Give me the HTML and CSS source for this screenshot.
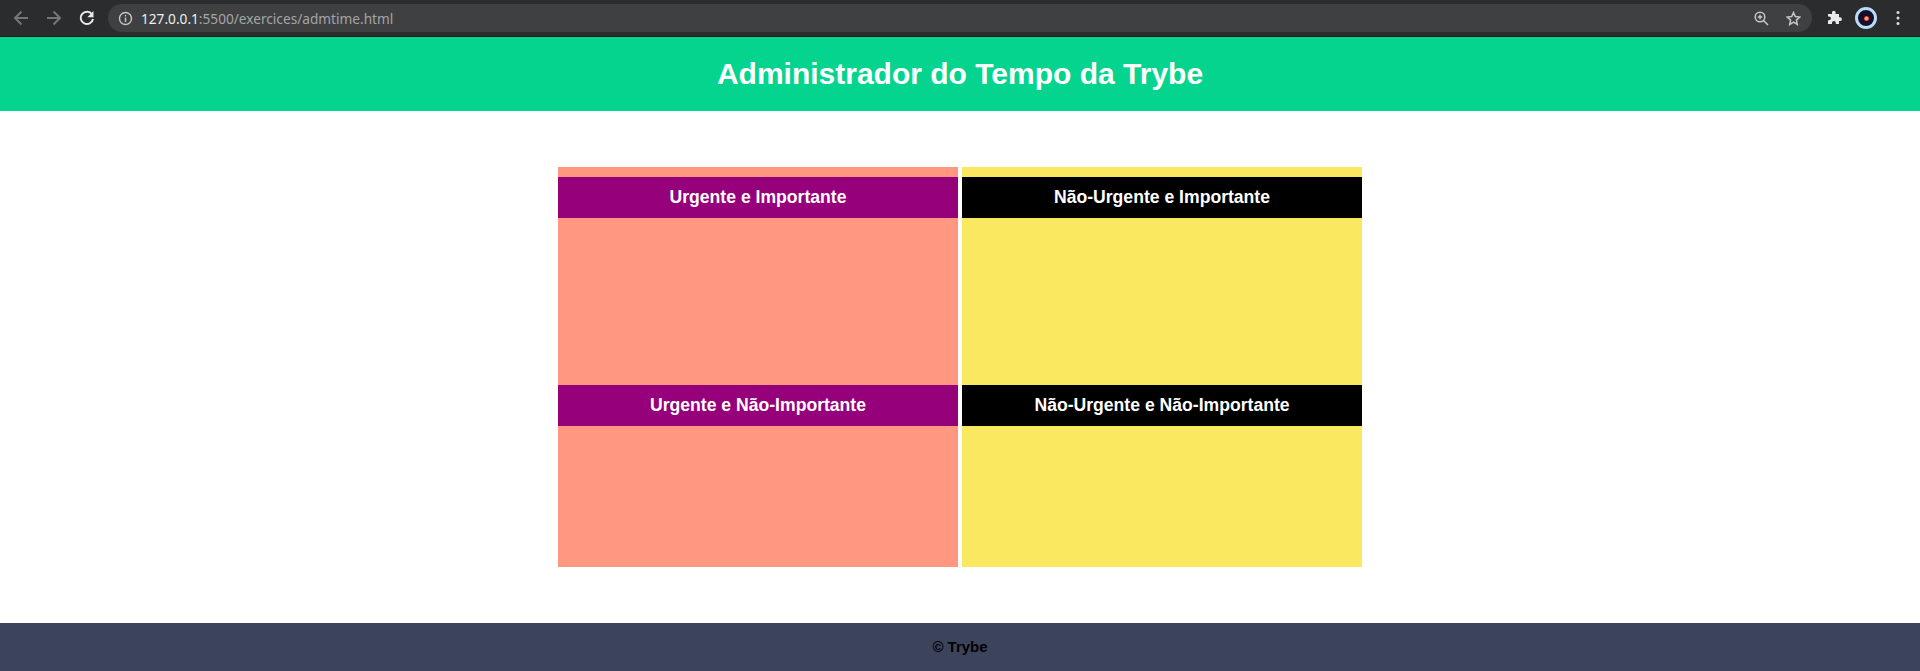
FILE: index.html
```html
<!DOCTYPE html>
<html lang="pt-BR">
<head>
    <meta charset="UTF-8">
    <title>Administrador do Tempo da Trybe</title>
    <link rel="stylesheet" href="styles.css">
</head>
<body>
    <div class="toolbar">
        <svg class="tool-icon" viewBox="0 0 18 18"><path d="M16 9H3M9.500 2.500L3 9l6.500 6.500" fill="none" stroke="#75767a" stroke-width="2"/></svg>
        <svg class="tool-icon" viewBox="0 0 18 18"><path d="M2 9h13M8.500 2.500L15 9l-6.500 6.500" fill="none" stroke="#75767a" stroke-width="2"/></svg>
        <svg class="tool-icon" viewBox="0 0 18 18"><path d="M14 5.300A6.200 6.200 0 1 0 15 10" fill="none" stroke="#e8eaed" stroke-width="2"/><path d="M15.500 2v6.200H9.300z" fill="#e8eaed"/></svg>
        <div class="address">
            <svg class="addr-icon" viewBox="0 0 15 15"><circle cx="7.500" cy="7.500" r="6" fill="none" stroke="#c4c7c9" stroke-width="1.400"/><path d="M7.500 6.500v4.500M7.500 4v1.500" stroke="#c4c7c9" stroke-width="1.400"/></svg>
            <span class="url"><span class="host">127.0.0.1</span>:5500/exercices/admtime.html</span>
            <div class="addr-right">
                <svg class="addr-icon" viewBox="0 0 15 15"><circle cx="6" cy="6" r="4.800" fill="none" stroke="#c4c7c9" stroke-width="1.500"/><path d="M9.500 9.500L14 14M3.700 6h4.600M6 3.700v4.600" stroke="#c4c7c9" stroke-width="1.500"/></svg>
                <svg class="addr-icon" viewBox="0 0 15 15"><path d="M7.500 1.600l1.800 4 4.400.5-3.300 3 .9 4.300-3.800-2.200-3.800 2.200.9-4.300-3.300-3 4.400-.5z" fill="none" stroke="#c4c7c9" stroke-width="1.500"/></svg>
            </div>
        </div>
        <svg class="puzzle" viewBox="0 0 16 16"><path d="M6 2.500a1.800 1.800 0 0 1 3.600 0V4h3.400v3.300h1a1.900 1.900 0 0 1 0 3.800h-1V14H9.800v-1a1.900 1.900 0 0 0-3.800 0v1H2v-3.800h1a1.900 1.900 0 0 0 0-3.800H2V4h4z" fill="#e8eaed"/></svg>
        <div class="avatar"><span class="avatar-dot"></span></div>
        <svg class="menu" viewBox="0 0 4 16"><circle cx="2" cy="2.500" r="1.500" fill="#dcdee0"/><circle cx="2" cy="8" r="1.500" fill="#dcdee0"/><circle cx="2" cy="13.500" r="1.500" fill="#dcdee0"/></svg>
    </div>

    <header class="page-header">
        <h1>Administrador do Tempo da Trybe</h1>
    </header>

    <main class="matrix">
        <section class="quadrant red first"><h2 class="purple">Urgente e Importante</h2></section>
        <section class="quadrant yellow first"><h2 class="black">Não-Urgente e Importante</h2></section>
        <section class="quadrant red"><h2 class="purple">Urgente e Não-Importante</h2></section>
        <section class="quadrant yellow"><h2 class="black">Não-Urgente e Não-Importante</h2></section>
    </main>

    <footer class="page-footer">© Trybe</footer>
</body>
</html>
```

FILE: styles.css
```css
* {
    box-sizing: border-box;
}
body {
    margin: 0;
    font-family: "Liberation Sans", Arial, sans-serif;
    background-color: white;
}
.toolbar {
    height: 37px;
    background-color: #2b2c2e;
    border-bottom: 1px solid #1b1b1c;
    display: flex;
    align-items: center;
    padding-left: 12px;
}
.tool-icon {
    width: 18px;
    height: 18px;
    margin-right: 15px;
}
.address {
    width: 1704px;
    height: 28px;
    margin-left: -3px;
    background-color: #3f4042;
    border-radius: 14px;
    display: flex;
    align-items: center;
    padding: 0 11px 0 10px;
    font-family: "Noto Sans", sans-serif;
    font-size: 13.67px;
}
.addr-icon {
    width: 15px;
    height: 15px;
}
.url {
    margin-left: 8px;
    color: #a3a5a7;
}
.host {
    color: #eeeff0;
}
.addr-right {
    margin-left: auto;
    display: flex;
    gap: 17px;
}
.puzzle {
    width: 16px;
    height: 16px;
    margin-left: 14px;
}
.avatar {
    width: 22px;
    height: 22px;
    margin-left: 13px;
    border-radius: 50%;
    background-color: #14102a;
    border: 3px solid #b9dcf8;
    display: flex;
    align-items: center;
    justify-content: center;
}
.avatar-dot {
    width: 5px;
    height: 5px;
    border-radius: 50%;
    background: radial-gradient(circle, #ffc23a 25%, #f0206a 70%);
}
.menu {
    width: 4px;
    height: 16px;
    margin-left: 19px;
}
.page-header {
    height: 74px;
    background-color: #05d48f;
    display: flex;
    align-items: center;
    justify-content: center;
}
h1 {
    margin: 0;
    color: white;
    font-size: 30px;
}
.matrix {
    width: 804px;
    margin: 56px auto;
    display: grid;
    grid-template-columns: 400px 400px;
    grid-template-rows: 218px 182px;
    column-gap: 4px;
}
.quadrant.first {
    padding-top: 10px;
}
.red {
    background-color: #ff9781;
}
.yellow {
    background-color: #fae960;
}
h2 {
    margin: 0;
    height: 41px;
    line-height: 41px;
    color: white;
    font-size: 17.6px;
    text-align: center;
}
.purple {
    background-color: #96007b;
}
.black {
    background-color: black;
}
.page-footer {
    height: 48px;
    background-color: #3c445c;
    color: black;
    font-size: 15px;
    font-weight: bold;
    text-align: center;
    line-height: 48px;
}
```
